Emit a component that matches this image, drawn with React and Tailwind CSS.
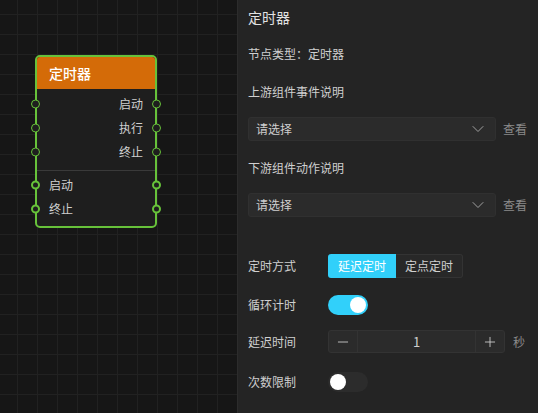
import { ChevronDown, Minus, Plus } from "lucide-react";

const font = { fontFamily: '"Noto Sans CJK SC", "Noto Sans", sans-serif' };

function Port({ side, thick }) {
  return (
    <span
      className={`absolute top-1/2 -translate-y-1/2 w-[9px] h-[9px] rounded-full border-[#67c23a] bg-[#1e1e1e] ${thick ? "border-2" : "border-[1.5px]"} ${
        side === "left" ? "left-[-6px]" : "right-[-6px]"
      }`}
    />
  );
}

function PortRow({ label, align }) {
  const input = align === "left";
  return (
    <div className={`relative h-6 flex items-center px-3 text-[12px] text-[#cfcfcf] ${input ? "justify-start" : "justify-end"}`}>
      <Port side="left" thick={input} />
      {label}
      <Port side="right" thick={input} />
    </div>
  );
}

function TimerNode() {
  return (
    <div className="absolute left-[35px] top-[55px] w-[122px] h-[173px] rounded-[5px] border-2 border-[#67c23a] bg-[#1e1e1e]">
      <div className="h-8 bg-[#d46b08] rounded-t-[3px] flex items-center px-3 text-[14px] font-medium text-white">定时器</div>
      <div className="pt-[3px]">
        <PortRow label="启动" align="right" />
        <PortRow label="执行" align="right" />
        <PortRow label="终止" align="right" />
      </div>
      <div className="mt-[6px] h-px bg-[#3a3a3a]" />
      <div className="pt-[2px]">
        <PortRow label="启动" align="left" />
        <PortRow label="终止" align="left" />
      </div>
    </div>
  );
}

function SelectRow({ className }) {
  return (
    <div className={`flex items-center ${className}`}>
      <div className="w-[248px] h-6 rounded-[3px] bg-[#2b2b2b] border border-[#303030] flex items-center justify-between pl-[7px] pr-[7px] text-[12px] text-[#cfcfcf]">
        <span>请选择</span>
        <ChevronDown size={20} strokeWidth={1.2} className="text-[#a0a0a0]" />
      </div>
      <span className="ml-[7px] text-[12px] text-[#8a8a8a]">查看</span>
    </div>
  );
}

function Toggle({ on, className = "" }) {
  return (
    <div className={`w-10 h-5 rounded-full flex items-center px-[2px] ${on ? "bg-[#31d0fa] justify-end" : "bg-[#2c2c2c] justify-start"} ${className}`}>
      <span className="w-4 h-4 rounded-full bg-white" />
    </div>
  );
}

function Label({ children }) {
  return <span className="w-20 shrink-0 text-[12px] text-[#cfcfcf]">{children}</span>;
}

export default function App() {
  return (
    <div className="w-[538px] h-[413px] flex overflow-hidden bg-[#161616]" style={font}>
      <div className="relative w-[237px] h-full bg-[linear-gradient(to_right,#212121_1px,transparent_1px),linear-gradient(to_bottom,#212121_1px,transparent_1px)] bg-[size:20px_20px] bg-[position:17px_14px]">
        <TimerNode />
      </div>
      <div className="flex-1 h-full bg-[#242424] border-l border-[#2c2c2c] pl-[10px] flex flex-col">
        <div className="h-[34px] flex items-center text-[14px] text-[#e2e2e2]">定时器</div>
        <div className="mt-[8px] h-6 flex items-center text-[12px] text-[#cfcfcf]">节点类型：定时器</div>
        <div className="mt-[14px] h-6 flex items-center text-[12px] text-[#cfcfcf]">上游组件事件说明</div>
        <SelectRow className="mt-[13px]" />
        <div className="mt-[15px] h-6 flex items-center text-[12px] text-[#cfcfcf]">下游组件动作说明</div>
        <SelectRow className="mt-[13px]" />

        <div className="mt-[37px] h-6 flex items-center">
          <Label>定时方式</Label>
          <div className="flex h-6 text-[12px]">
            <span className="w-[68px] flex items-center justify-center rounded-l-[3px] bg-[#31d0fa] text-white">延迟定时</span>
            <span className="w-[67px] flex items-center justify-center rounded-r-[3px] bg-[#282828] border border-l-0 border-[#333] text-[#cfcfcf]">定点定时</span>
          </div>
        </div>

        <div className="mt-[17px] h-5 flex items-center">
          <Label>循环计时</Label>
          <Toggle on />
        </div>

        <div className="mt-[15px] h-[23px] flex items-center">
          <Label>延迟时间</Label>
          <div className="w-[177px] h-[23px] flex rounded-[3px] bg-[#2b2b2b] border border-[#333] text-[#cfcfcf]">
            <span className="w-[29px] flex items-center justify-center border-r border-[#333]">
              <Minus size={16} strokeWidth={1.3} />
            </span>
            <span className="flex-1 flex items-center justify-center text-[13px]">1</span>
            <span className="w-[29px] flex items-center justify-center border-l border-[#333]">
              <Plus size={16} strokeWidth={1.3} />
            </span>
          </div>
          <span className="ml-[8px] text-[12px] text-[#8a8a8a]">秒</span>
        </div>

        <div className="mt-[19px] h-5 flex items-center">
          <Label>次数限制</Label>
          <Toggle on={false} />
        </div>
      </div>
    </div>
  );
}
